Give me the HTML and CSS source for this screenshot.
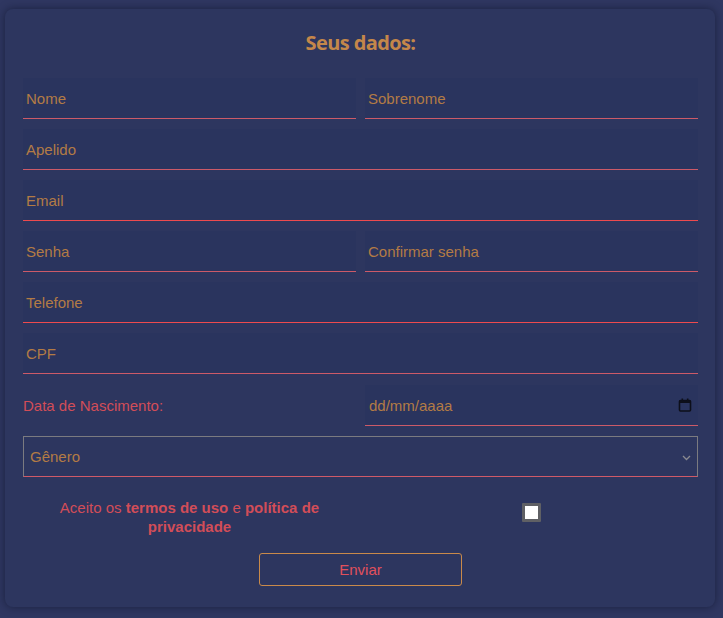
FILE: index.html
```html
<!DOCTYPE html>
<html lang="pt-BR">
<head>
<meta charset="utf-8">
<title>Seus dados</title>
<link rel="stylesheet" href="styles.css">
</head>
<body>
<main class="card">
  <h1 class="title">Seus dados:</h1>
  <form class="form">
    <div class="row2">
      <input class="field" type="text" placeholder="Nome">
      <input class="field" type="text" placeholder="Sobrenome">
    </div>
    <input class="field" type="text" placeholder="Apelido">
    <input class="field field-alert" type="text" placeholder="Email">
    <div class="row2">
      <input class="field" type="text" placeholder="Senha">
      <input class="field" type="text" placeholder="Confirmar senha">
    </div>
    <input class="field field-alert" type="text" placeholder="Telefone">
    <input class="field" type="text" placeholder="CPF">
    <div class="row2 date-row">
      <span class="label">Data de Nascimento:</span>
      <div class="field date">
        <span>dd/mm/aaaa</span>
        <svg class="cal" width="14" height="14" viewBox="0 0 14 14">
          <rect x="1.5" y="2.5" width="11" height="10.5" rx="1" fill="none" stroke="#0d0f1a" stroke-width="1.6"/>
          <rect x="1.5" y="2.5" width="11" height="2.5" fill="#0d0f1a"/>
          <rect x="3.5" y="0.5" width="1.6" height="2.5" fill="#0d0f1a"/>
          <rect x="8.9" y="0.5" width="1.6" height="2.5" fill="#0d0f1a"/>
        </svg>
      </div>
    </div>
    <div class="select">
      <span>Gênero</span>
      <svg class="chev" width="9" height="6" viewBox="0 0 9 6">
        <polyline points="1,1 4.5,4.5 8,1" fill="none" stroke="#8a8a90" stroke-width="1.3"/>
      </svg>
    </div>
    <div class="row2 terms">
      <p class="terms-text">Aceito os <b>termos de uso</b> e <b>política de privacidade</b></p>
      <div class="check-cell"><span class="check"></span></div>
    </div>
    <div class="actions">
      <button type="button" class="btn">Enviar</button>
    </div>
  </form>
</main>
</body>
</html>
```

FILE: styles.css
```css
html, body {
  margin: 0;
  padding: 0;
  background: #2f3761;
}
body {
  width: 723px;
  height: 618px;
  overflow: hidden;
  font-family: "Liberation Sans", Arial, sans-serif;
}
.card {
  box-sizing: border-box;
  margin: 9px 0 0 5px;
  width: 710px;
  height: 598px;
  padding: 22px 17px 0 18px;
  background: #2d365f;
  border-radius: 8px;
  box-shadow: 0 0 8px rgba(10, 14, 35, 0.55);
}
.title {
  margin: 0;
  text-align: center;
  font-family: "Open Sans", sans-serif;
  font-weight: 700;
  font-size: 20px;
  line-height: 24px;
  letter-spacing: -0.6px;
  color: #c4874a;
}
.form {
  margin-top: 23px;
  display: flex;
  flex-direction: column;
  gap: 10px;
}
.row2 {
  display: grid;
  grid-template-columns: 1fr 1fr;
  column-gap: 9px;
}
.field {
  box-sizing: border-box;
  display: block;
  width: 100%;
  height: 41px;
  margin: 0;
  padding: 0 3px;
  border: 0;
  border-bottom: 1px solid #cc5a68;
  background: #2a345e;
  color: #b37b45;
  font-family: "Liberation Sans", Arial, sans-serif;
  font-size: 15px;
  outline: none;
}
.field::placeholder {
  color: #b37b45;
  opacity: 1;
}
.field-alert {
  border-bottom-color: #ee4a4e;
}
.date-row {
  margin-top: 1px;
  align-items: center;
}
.label {
  color: #d24d58;
  font-size: 15px;
}
.date {
  display: flex;
  align-items: center;
  justify-content: space-between;
  padding: 0 6px 0 4px;
}
.cal {
  display: block;
}
.select {
  box-sizing: border-box;
  height: 41px;
  display: flex;
  align-items: center;
  justify-content: space-between;
  padding: 0 6px 0 6px;
  border: 1px solid #7b7b80;
  border-bottom-color: #cf5a68;
  color: #b37b45;
  font-size: 15px;
}
.chev {
  display: block;
  margin-top: 2px;
}
.terms {
  margin-top: 11px;
  align-items: start;
}
.terms-text {
  margin: 0;
  padding: 0 20px;
  text-align: center;
  color: #d24d58;
  font-size: 15px;
  line-height: 19px;
}
.terms-text b {
  font-weight: 700;
}
.check-cell {
  display: flex;
  justify-content: center;
  padding-top: 5px;
}
.check {
  box-sizing: border-box;
  width: 19px;
  height: 19px;
  border: 3px solid #5f6064;
  background: #ffffff;
  border-radius: 1px;
}
.actions {
  margin-top: 7px;
  display: flex;
  justify-content: center;
}
.btn {
  box-sizing: border-box;
  width: 203px;
  height: 33px;
  margin: 0;
  padding: 0;
  background: transparent;
  border: 1px solid #c98a4a;
  border-radius: 3px;
  color: #e2505c;
  font-family: "Liberation Sans", Arial, sans-serif;
  font-size: 15px;
}
```
